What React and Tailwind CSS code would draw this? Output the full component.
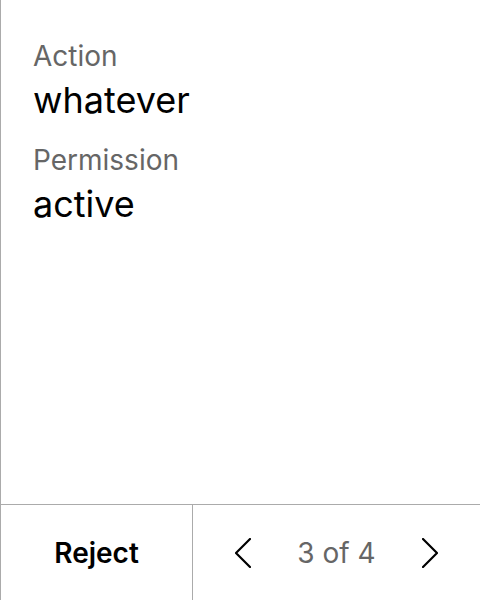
export default function App() {
  const fields = [
    { label: 'Action', value: 'whatever' },
    { label: 'Permission', value: 'active' },
  ]

  return (
    <div className="h-screen w-full flex flex-col bg-white border-l border-[#ababab] font-['Inter',sans-serif]">
      {/* Details */}
      <div className="flex-1 px-8 pt-[37px] flex flex-col gap-4">
        {fields.map((f) => (
          <div key={f.label} className="flex flex-col">
            <span className="text-[28px] leading-[38px] text-[#666]">{f.label}</span>
            <span className="text-[36px] leading-[50px] text-black">{f.value}</span>
          </div>
        ))}
      </div>

      {/* Footer */}
      <div className="h-24 flex border-t border-[#ababab]">
        <button className="w-48 flex items-center justify-center text-[28px] font-semibold text-black border-r border-[#ababab]">
          Reject
        </button>
        <div className="flex-1 flex items-center justify-between px-[42px]">
          <svg width="16" height="30" viewBox="0 0 16 30" fill="none" stroke="black" strokeWidth="2.2" strokeLinecap="round" strokeLinejoin="round">
            <path d="M15 1 1 15l14 14" />
          </svg>
          <span className="text-[28px] text-[#666]">3 of 4</span>
          <svg width="16" height="30" viewBox="0 0 16 30" fill="none" stroke="black" strokeWidth="2.2" strokeLinecap="round" strokeLinejoin="round">
            <path d="M1 1l14 14L1 29" />
          </svg>
        </div>
      </div>
    </div>
  )
}
